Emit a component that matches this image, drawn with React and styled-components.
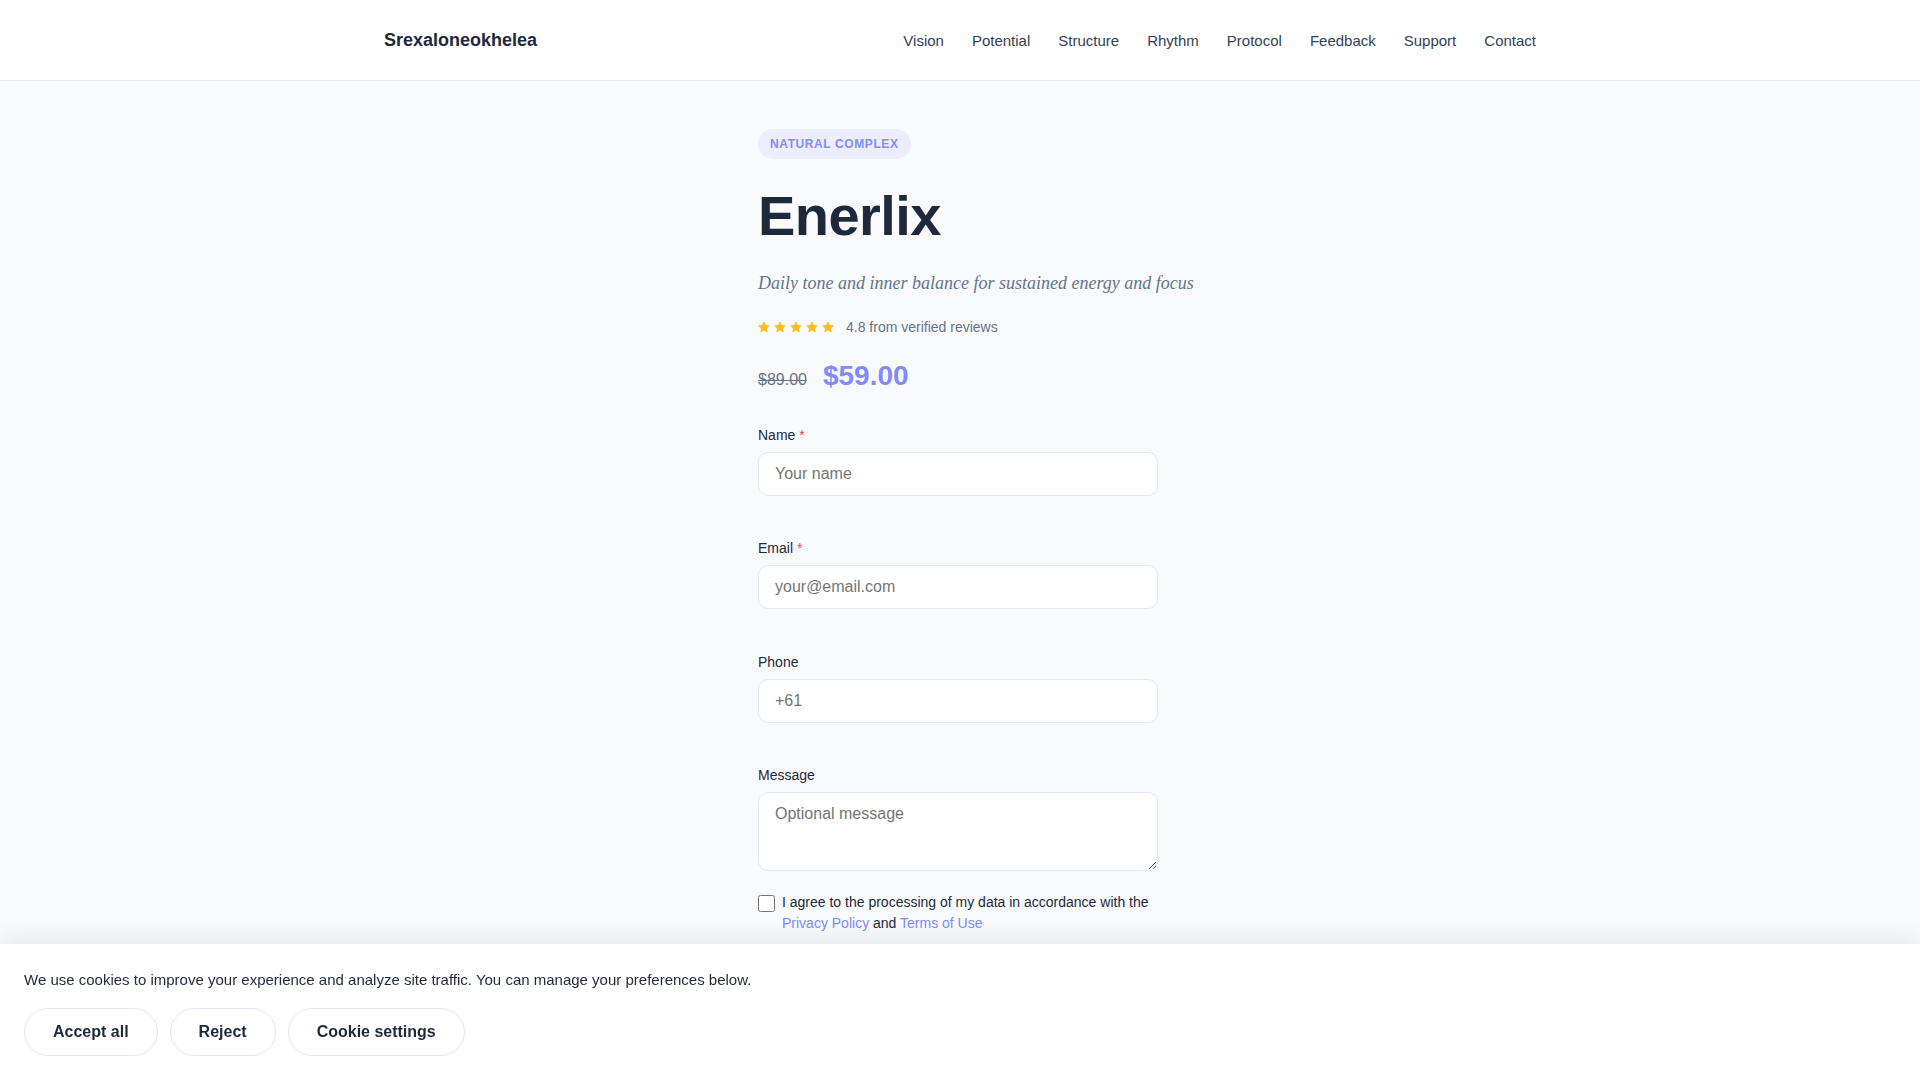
import React from "react";
import styled, { createGlobalStyle } from "styled-components";

const GlobalStyle = createGlobalStyle`
  * { box-sizing: border-box; }
  html, body { margin: 0; padding: 0; }
  body {
    background: #f8fafc;
    font-family: "Liberation Sans", Arial, sans-serif;
    color: #1e293b;
  }
`;

const Header = styled.header`
  height: 81px;
  background: #ffffff;
  border-bottom: 1px solid #e2e8f0;
`;

const HeaderInner = styled.div`
  max-width: 1200px;
  height: 80px;
  margin: 0 auto;
  padding: 0 24px;
  display: flex;
  align-items: center;
  justify-content: space-between;
`;

const Logo = styled.a`
  font-size: 18px;
  font-weight: 700;
  color: #1e293b;
  text-decoration: none;
`;

const Nav = styled.nav`
  display: flex;
  align-items: center;
  gap: 28px;
`;

const NavLink = styled.a`
  font-size: 15px;
  color: #334155;
  text-decoration: none;
`;

const Main = styled.main`
  display: flex;
  justify-content: center;
  padding: 48px 24px 200px;
`;

const Column = styled.div`
  width: 404px;
  display: flex;
  flex-direction: column;
  align-items: flex-start;
`;

const Badge = styled.span`
  display: inline-block;
  padding: 6px 12px;
  border-radius: 999px;
  background: #eceefd;
  color: #818cf8;
  font-size: 12px;
  line-height: 18px;
  font-weight: 700;
  letter-spacing: 0.05em;
  text-transform: uppercase;
  margin-bottom: 26px;
`;

const Title = styled.h1`
  margin: 0 0 22px;
  font-size: 56px;
  line-height: 1.1;
  font-weight: 700;
  letter-spacing: -0.01em;
  color: #1e293b;
`;

const Subtitle = styled.p`
  margin: 0 0 20px;
  font-family: "Liberation Serif", "Times New Roman", serif;
  font-style: italic;
  font-size: 18px;
  line-height: 28px;
  color: #64748b;
  white-space: nowrap;
`;

const Rating = styled.div`
  display: flex;
  align-items: center;
  gap: 12px;
  height: 20px;
  margin-bottom: 21px;
`;

const Stars = styled.span`
  display: flex;
  align-items: center;
  gap: 4px;
  color: #fbbf24;
`;

const StarIcon = styled.svg`
  width: 12px;
  height: 12px;
  display: block;
`;

const RatingText = styled.span`
  font-size: 14px;
  line-height: 20px;
  color: #64748b;
`;

const PriceRow = styled.div`
  display: flex;
  align-items: baseline;
  gap: 16px;
  line-height: 36px;
  margin-bottom: 27px;
`;

const OldPrice = styled.span`
  font-size: 16px;
  color: #64748b;
  text-decoration: line-through;
`;

const NewPrice = styled.span`
  font-size: 28px;
  font-weight: 700;
  color: #818cf8;
`;

const Form = styled.form`
  width: 400px;
  display: flex;
  flex-direction: column;
`;

const Field = styled.div`
  display: flex;
  flex-direction: column;
  margin-bottom: ${(p) => (p.$last ? "21px" : "42.5px")};
`;

const Label = styled.label`
  font-size: 14px;
  line-height: 21px;
  color: #1e293b;
  margin-bottom: 6px;
`;

const Required = styled.span`
  color: #ef4444;
  margin-left: 4px;
`;

const fieldBase = `
  width: 100%;
  border: 1px solid #e2e8f0;
  border-radius: 10px;
  background: #ffffff;
  font-family: "Liberation Sans", Arial, sans-serif;
  font-size: 16px;
  color: #1e293b;
  padding: 12px 16px;
  outline: none;
  &::placeholder { color: #757575; }
`;

const Input = styled.input`
  ${fieldBase}
  height: 44px;
`;

const TextArea = styled.textarea`
  ${fieldBase}
  height: 79px;
  line-height: normal;
  resize: vertical;
  display: block;
`;

const Consent = styled.label`
  display: flex;
  align-items: flex-start;
  gap: 7px;
  font-size: 14px;
  line-height: 21px;
  color: #1e293b;
  margin-bottom: 24px;
`;

const Checkbox = styled.input`
  width: 17px;
  height: 17px;
  margin: 3px 0 0;
  flex-shrink: 0;
`;

const TextLink = styled.a`
  color: #818cf8;
  text-decoration: none;
`;

const Submit = styled.button`
  height: 52px;
  border: none;
  border-radius: 999px;
  background: #818cf8;
  color: #ffffff;
  font-family: "Liberation Sans", Arial, sans-serif;
  font-size: 16px;
  font-weight: 700;
`;

const CookieBar = styled.div`
  position: fixed;
  left: 0;
  right: 0;
  bottom: 0;
  background: #ffffff;
  padding: 24px;
  box-shadow: 0 -6px 22px rgba(15, 23, 42, 0.07);
  border-top: 1px solid #eef0f3;
`;

const CookieText = styled.p`
  margin: 0 0 16px;
  font-size: 15px;
  line-height: 24px;
  color: #1e293b;
`;

const CookieActions = styled.div`
  display: flex;
  gap: 12px;
`;

const CookieButton = styled.button`
  height: 48px;
  padding: 0 28px;
  border: 1px solid #e2e8f0;
  border-radius: 999px;
  background: #ffffff;
  color: #1e293b;
  font-family: "Liberation Sans", Arial, sans-serif;
  font-size: 16px;
  font-weight: 700;
  cursor: pointer;
`;

const navItems = ["Vision", "Potential", "Structure", "Rhythm", "Protocol", "Feedback", "Support", "Contact"];

const Star = () => (
  <StarIcon viewBox="2 2 20 19.4" aria-hidden="true">
    <polygon
      fill="currentColor"
      points="12,2 15.09,8.26 22,9.27 17,14.14 18.18,21.02 12,17.77 5.82,21.02 7,14.14 2,9.27 8.91,8.26"
    />
  </StarIcon>
);

export default function App() {
  return (
    <>
      <GlobalStyle />
      <Header>
        <HeaderInner>
          <Logo href="#">Srexaloneokhelea</Logo>
          <Nav>
            {navItems.map((n) => (
              <NavLink key={n} href="#">{n}</NavLink>
            ))}
          </Nav>
        </HeaderInner>
      </Header>
      <Main>
        <Column>
          <Badge>Natural complex</Badge>
          <Title>Enerlix</Title>
          <Subtitle>Daily tone and inner balance for sustained energy and focus</Subtitle>
          <Rating>
            <Stars>
              {[0, 1, 2, 3, 4].map((i) => (
                <Star key={i} />
              ))}
            </Stars>
            <RatingText>4.8 from verified reviews</RatingText>
          </Rating>
          <PriceRow>
            <OldPrice>$89.00</OldPrice>
            <NewPrice>$59.00</NewPrice>
          </PriceRow>
          <Form onSubmit={(e) => e.preventDefault()}>
            <Field>
              <Label htmlFor="name">Name<Required>*</Required></Label>
              <Input id="name" placeholder="Your name" />
            </Field>
            <Field>
              <Label htmlFor="email">Email<Required>*</Required></Label>
              <Input id="email" type="email" placeholder="your@email.com" />
            </Field>
            <Field>
              <Label htmlFor="phone">Phone</Label>
              <Input id="phone" type="tel" placeholder="+61" />
            </Field>
            <Field $last>
              <Label htmlFor="message">Message</Label>
              <TextArea id="message" placeholder="Optional message" />
            </Field>
            <Consent>
              <Checkbox type="checkbox" />
              <span>
                I agree to the processing of my data in accordance with the{" "}
                <TextLink href="#">Privacy Policy</TextLink> and{" "}
                <TextLink href="#">Terms of Use</TextLink>
              </span>
            </Consent>
            <Submit type="submit">Order now</Submit>
          </Form>
        </Column>
      </Main>
      <CookieBar>
        <CookieText>
          We use cookies to improve your experience and analyze site traffic. You can manage your preferences below.
        </CookieText>
        <CookieActions>
          <CookieButton>Accept all</CookieButton>
          <CookieButton>Reject</CookieButton>
          <CookieButton>Cookie settings</CookieButton>
        </CookieActions>
      </CookieBar>
    </>
  );
}
